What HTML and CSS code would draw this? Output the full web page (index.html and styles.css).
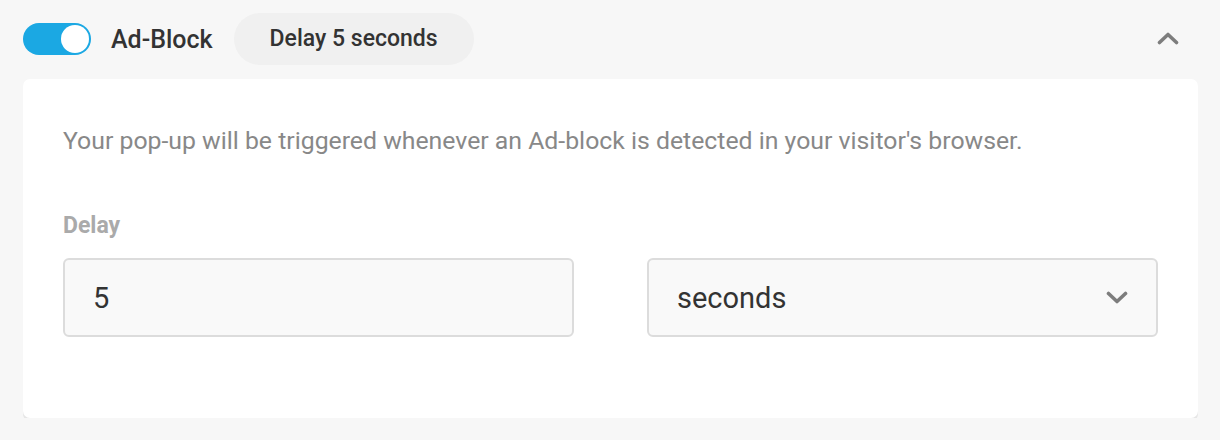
FILE: index.html
```html
<!DOCTYPE html>
<html lang="en">
<head>
<meta charset="utf-8">
<title>Ad-Block trigger</title>
<link rel="stylesheet" href="styles.css">
</head>
<body>
<div class="panel">
  <div class="panel-head">
    <div class="toggle"><span class="knob"></span></div>
    <span class="title">Ad-Block</span>
    <span class="pill">Delay 5 seconds</span>
    <span class="spacer"></span>
    <svg class="chev-up" width="22" height="14" viewBox="0 0 22 14"><polyline points="2.5,11.5 11,3.5 19.5,11.5" fill="none" stroke="#7d7d7d" stroke-width="3.6" stroke-linecap="round" stroke-linejoin="round"/></svg>
  </div>
  <div class="card">
    <p class="desc">Your pop-up will be triggered whenever an Ad-block is detected in your visitor's browser.</p>
    <div class="label">Delay</div>
    <div class="fields">
      <div class="field">5</div>
      <div class="field select">
        <span>seconds</span>
        <svg width="22" height="14" viewBox="0 0 22 14"><polyline points="2.5,2.5 11,10.5 19.5,2.5" fill="none" stroke="#7d7d7d" stroke-width="3.6" stroke-linecap="round" stroke-linejoin="round"/></svg>
      </div>
    </div>
  </div>
</div>
</body>
</html>
```

FILE: styles.css
```css
* { box-sizing: border-box; }
html, body {
  margin: 0;
  padding: 0;
  background: #f7f7f7;
  font-family: Roboto, "Liberation Sans", sans-serif;
}
.panel {
  padding: 0 22px 0 23px;
}
.panel-head {
  height: 79px;
  display: flex;
  align-items: center;
  padding-bottom: 1px;
}
.toggle {
  width: 68px;
  height: 32px;
  border-radius: 16px;
  background: #1ba8e3;
  display: flex;
  align-items: center;
  justify-content: flex-end;
  padding: 2px;
}
.knob {
  width: 28px;
  height: 28px;
  border-radius: 50%;
  background: #fff;
}
.title {
  margin-left: 20px;
  font-size: 25px;
  font-weight: 500;
  color: #333;
}
.pill {
  margin-left: 21px;
  height: 52px;
  line-height: 52px;
  padding: 0 36px;
  border-radius: 26px;
  background: #f0f0f0;
  font-size: 23px;
  font-weight: 500;
  color: #333;
}
.spacer { flex: 1; }
.chev-up {
  margin-right: 19px;
  margin-top: -2px;
}
.card {
  background: #fff;
  border-radius: 7px;
  box-shadow: 0 3px 0 #e6e6e6;
  padding: 48px 40px 81px 40px;
}
.desc {
  margin: 0;
  font-size: 24.8px;
  line-height: 28px;
  color: #888;
}
.label {
  margin-top: 57px;
  font-size: 23px;
  line-height: 28px;
  font-weight: 700;
  color: #aaa;
}
.fields {
  margin-top: 18px;
  display: grid;
  grid-template-columns: 1fr 1fr;
  column-gap: 73px;
}
.field {
  height: 79px;
  border: 2px solid #dcdcdc;
  border-radius: 6px;
  background: #f9f9f9;
  padding: 0 28px 0 28px;
  display: flex;
  align-items: center;
  justify-content: space-between;
  font-size: 29px;
  color: #333;
}
```
